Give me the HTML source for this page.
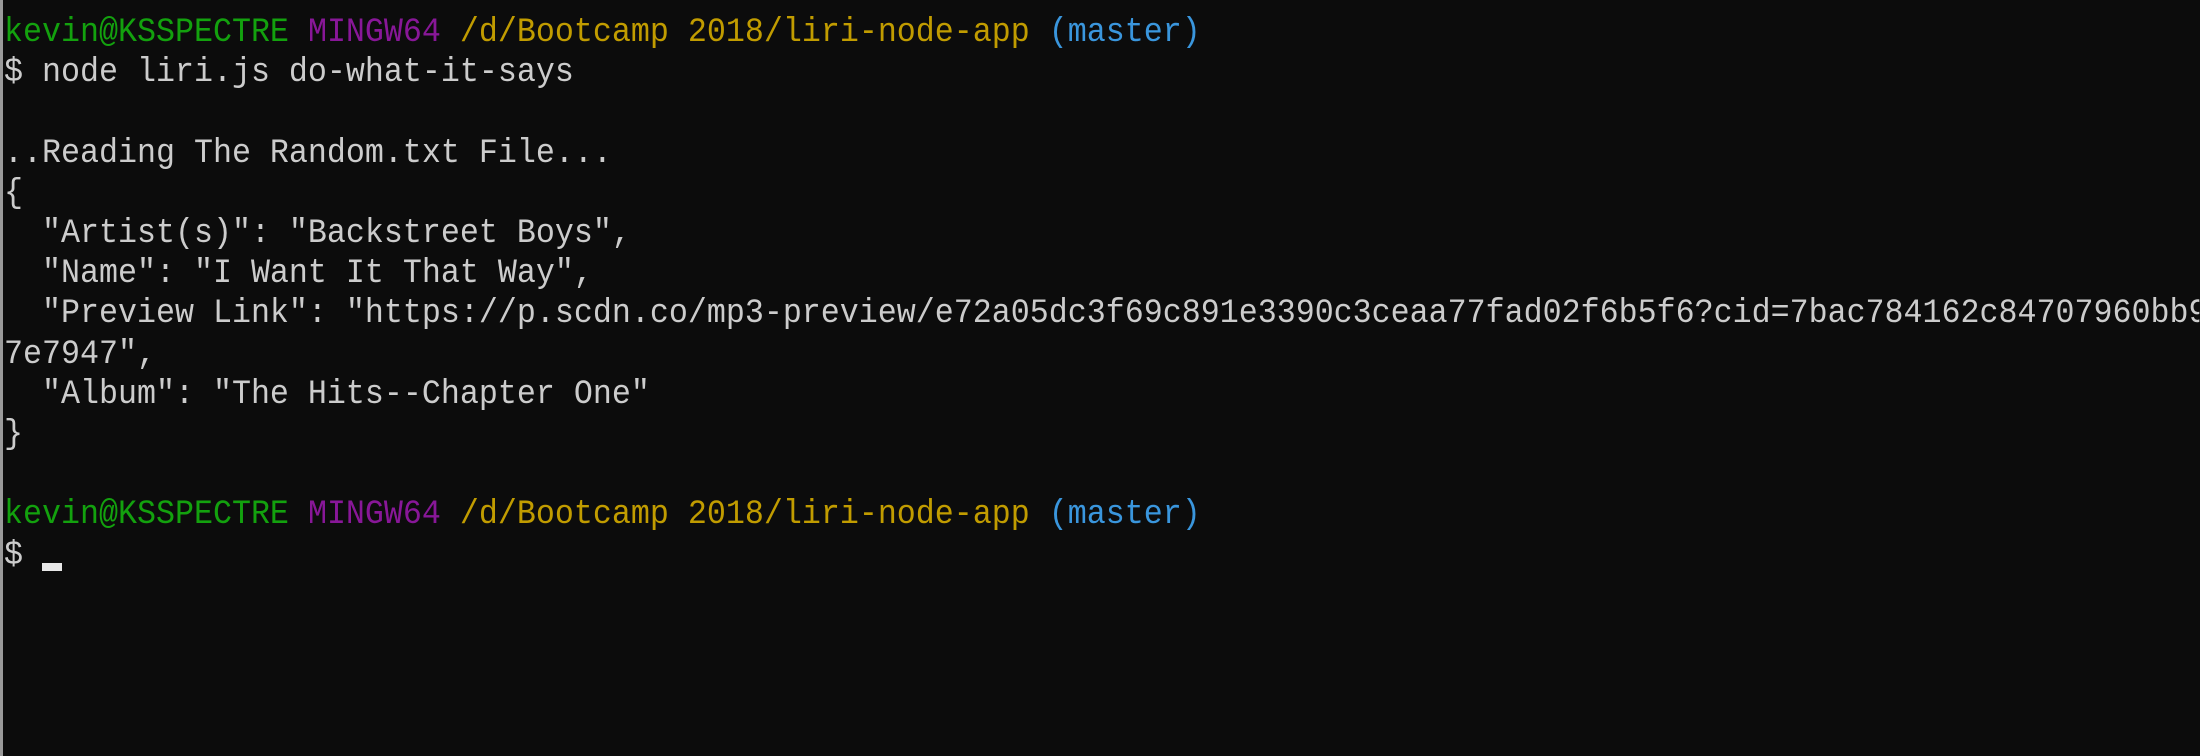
<!DOCTYPE html>
<html><head><meta charset="utf-8"><style>
html,body{margin:0;padding:0;background:#0c0c0c;width:2200px;height:756px;overflow:hidden;position:relative}
.edge{position:absolute;left:0;top:0;width:3px;height:756px;background:#9a9a9a}
.t{position:absolute;left:4px;top:13px;font-family:"Liberation Mono","DejaVu Sans Mono",monospace;font-size:34px;line-height:40.2px;color:#cccccc;white-space:pre;width:2358px;overflow:hidden;transform:scaleX(0.931);transform-origin:0 0}
.g{color:#13a10e}.p{color:#881798}.y{color:#c19c00}.b{color:#3a96dd}
.cur{position:absolute;left:42px;top:563px;width:20px;height:8px;background:#e8e8e8}
</style></head><body>
<div class="edge"></div>
<div class="t"><span class="g">kevin@KSSPECTRE</span> <span class="p">MINGW64</span> <span class="y">/d/Bootcamp 2018/liri-node-app</span> <span class="b">(master)</span>
$ node liri.js do-what-it-says

..Reading The Random.txt File...
{
  "Artist(s)": "Backstreet Boys",
  "Name": "I Want It That Way",
  "Preview Link": "https://p.scdn.co/mp3-preview/e72a05dc3f69c891e3390c3ceaa77fad02f6b5f6?cid=7bac784162c84707960bb9
7e7947",
  "Album": "The Hits--Chapter One"
}

<span class="g">kevin@KSSPECTRE</span> <span class="p">MINGW64</span> <span class="y">/d/Bootcamp 2018/liri-node-app</span> <span class="b">(master)</span>
$ </div>
<div class="cur"></div>
</body></html>
